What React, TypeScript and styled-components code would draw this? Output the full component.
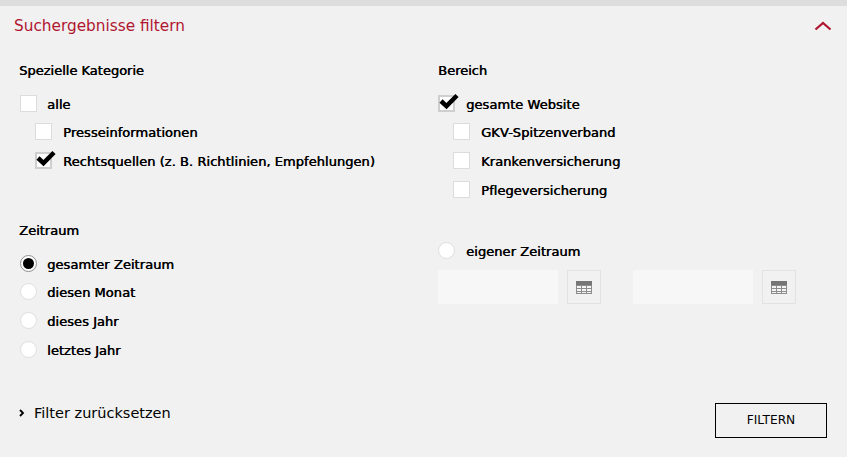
import styled, { createGlobalStyle } from 'styled-components'

const GlobalStyle = createGlobalStyle`
  html, body {
    margin: 0;
    padding: 0;
    background: #f1f1f1;
    font-family: 'DejaVu Sans', sans-serif;
    color: #000;
  }
`

const Panel = styled.section`
  width: 847px;
  height: 457px;
  box-sizing: border-box;
  border-top: 6px solid #dddddd;
  background: #f1f1f1;
  overflow: hidden;
`

const Header = styled.header`
  display: flex;
  justify-content: space-between;
  align-items: center;
  height: 40px;
  padding: 0 15px 0 14px;
`

const Title = styled.h2`
  margin: 0;
  font-size: 15.3px;
  font-weight: 400;
  color: #b0152f;
`

const Columns = styled.div`
  display: grid;
  grid-template-columns: 419px 1fr;
  padding: 17px 0 0 19px;
`

const Column = styled.div`
  display: flex;
  flex-direction: column;
`

const Heading = styled.h3<{ $top?: number }>`
  margin: ${({ $top }) => $top ?? 0}px 0 0;
  height: 16px;
  line-height: 16px;
  font-size: 13px;
  font-weight: 400;
  text-shadow: 0.5px 0 0 currentColor;
`

const Options = styled.div<{ $top: number }>`
  display: flex;
  flex-direction: column;
  margin-top: ${({ $top }) => $top}px;
`

const Row = styled.label<{ $indent: number; $gap?: number }>`
  display: flex;
  align-items: center;
  height: 28.67px;
  margin-left: ${({ $indent }) => $indent}px;
  gap: ${({ $gap }) => $gap ?? 10}px;
  font-size: 13px;
  font-weight: 400;
  letter-spacing: 0.05px;
  text-shadow: 0.5px 0 0 currentColor;
  white-space: nowrap;
`

const Box = styled.span<{ $checked?: boolean }>`
  position: relative;
  flex: none;
  width: 17px;
  height: 17px;
  box-sizing: border-box;
  margin-top: -2px;
  background: #fff;
  border-style: solid;
  border-color: ${({ $checked }) => ($checked ? '#cfcfcf' : '#dcdcdc')};
  border-width: ${({ $checked }) => ($checked ? 2 : 1)}px;
`

const Tick = styled.svg`
  position: absolute;
  left: -1px;
  top: -5px;
  width: 20px;
  height: 18px;
`

const Radio = styled.span<{ $checked?: boolean }>`
  flex: none;
  display: flex;
  align-items: center;
  justify-content: center;
  width: 17px;
  height: 17px;
  box-sizing: border-box;
  margin-top: -2px;
  border-radius: 50%;
  background: #fff;
  border: 1px solid ${({ $checked }) => ($checked ? '#8f8f8f' : '#dedede')};

  &::after {
    content: '';
    display: ${({ $checked }) => ($checked ? 'block' : 'none')};
    width: 11px;
    height: 11px;
    border-radius: 50%;
    background: #000;
  }
`

const DateRow = styled.div`
  display: flex;
  margin-top: 4px;
`

const DateField = styled.div`
  display: flex;
  gap: 9px;
  margin-right: 32px;
`

const DateInput = styled.input`
  width: 120px;
  height: 34px;
  box-sizing: border-box;
  border: 0;
  background: #f7f7f7;
`

const CalendarButton = styled.button`
  display: flex;
  align-items: center;
  justify-content: center;
  width: 34px;
  height: 34px;
  padding: 0;
  box-sizing: border-box;
  background: transparent;
  border: 1px solid #e2e2e2;
`

const Footer = styled.footer`
  display: flex;
  justify-content: space-between;
  align-items: center;
  padding: 0 20px 0 19px;
  margin-top: 38px;
`

const ResetLink = styled.a`
  display: flex;
  align-items: center;
  gap: 9px;
  margin-top: -14px;
  font-size: 14.5px;
  color: #000;
`

const FilterButton = styled.button`
  width: 112px;
  height: 35px;
  box-sizing: border-box;
  background: transparent;
  border: 1px solid #000;
  font-family: inherit;
  font-size: 12.2px;
  color: #000;
`

const Check = () => (
  <Tick viewBox="0 0 20 18">
    <path d="M2 9 L7.5 14.2 L18 3.5" fill="none" stroke="#000" strokeWidth="4.5" />
  </Tick>
)

const CalendarIcon = () => (
  <svg width="16" height="13" viewBox="0 0 16 13">
    <rect width="16" height="13" fill="#8c8c8c" />
    <rect y="0" width="16" height="4" fill="#767676" />
    <g fill="#f4f4f4">
      <rect x="1" y="5" width="4" height="2" />
      <rect x="6" y="5" width="4" height="2" />
      <rect x="11" y="5" width="4" height="2" />
      <rect x="1" y="8" width="4" height="2" />
      <rect x="6" y="8" width="4" height="2" />
      <rect x="11" y="8" width="4" height="2" />
      <rect x="1" y="11" width="4" height="1" />
      <rect x="6" y="11" width="4" height="1" />
      <rect x="11" y="11" width="4" height="1" />
    </g>
  </svg>
)

const App = () => {
  return (
    <>
      <GlobalStyle />
      <Panel>
        <Header>
          <Title>Suchergebnisse filtern</Title>
          <svg width="18" height="10" viewBox="0 0 18 10">
            <path d="M1.5 8.5 L9 2 L16.5 8.5" fill="none" stroke="#b0152f" strokeWidth="2.2" />
          </svg>
        </Header>
        <Columns>
          <Column>
            <Heading>Spezielle Kategorie</Heading>
            <Options $top={11}>
              <Row $indent={1}>
                <Box />
                alle
              </Row>
              <Row $indent={16} $gap={11}>
                <Box />
                Presseinformationen
              </Row>
              <Row $indent={16} $gap={11}>
                <Box $checked>
                  <Check />
                </Box>
                Rechtsquellen (z. B. Richtlinien, Empfehlungen)
              </Row>
            </Options>
            <Heading $top={47}>Zeitraum</Heading>
            <Options $top={11}>
              <Row $indent={1}>
                <Radio $checked />
                gesamter Zeitraum
              </Row>
              <Row $indent={1}>
                <Radio />
                diesen Monat
              </Row>
              <Row $indent={1}>
                <Radio />
                dieses Jahr
              </Row>
              <Row $indent={1}>
                <Radio />
                letztes Jahr
              </Row>
            </Options>
          </Column>
          <Column>
            <Heading>Bereich</Heading>
            <Options $top={11}>
              <Row $indent={0} $gap={11}>
                <Box $checked>
                  <Check />
                </Box>
                gesamte Website
              </Row>
              <Row $indent={15} $gap={11}>
                <Box />
                GKV-Spitzenverband
              </Row>
              <Row $indent={15} $gap={11}>
                <Box />
                Krankenversicherung
              </Row>
              <Row $indent={15} $gap={11}>
                <Box />
                Pflegeversicherung
              </Row>
            </Options>
            <Options $top={33}>
              <Row $indent={0} $gap={11}>
                <Radio />
                eigener Zeitraum
              </Row>
            </Options>
            <DateRow>
              <DateField>
                <DateInput />
                <CalendarButton>
                  <CalendarIcon />
                </CalendarButton>
              </DateField>
              <DateField>
                <DateInput />
                <CalendarButton>
                  <CalendarIcon />
                </CalendarButton>
              </DateField>
            </DateRow>
          </Column>
        </Columns>
        <Footer>
          <ResetLink>
            <svg width="6" height="8" viewBox="0 0 6 8">
              <path d="M1 1 L4 4 L1 7" fill="none" stroke="#000" strokeWidth="1.8" />
            </svg>
            Filter zurücksetzen
          </ResetLink>
          <FilterButton>FILTERN</FilterButton>
        </Footer>
      </Panel>
    </>
  )
}

export default App
